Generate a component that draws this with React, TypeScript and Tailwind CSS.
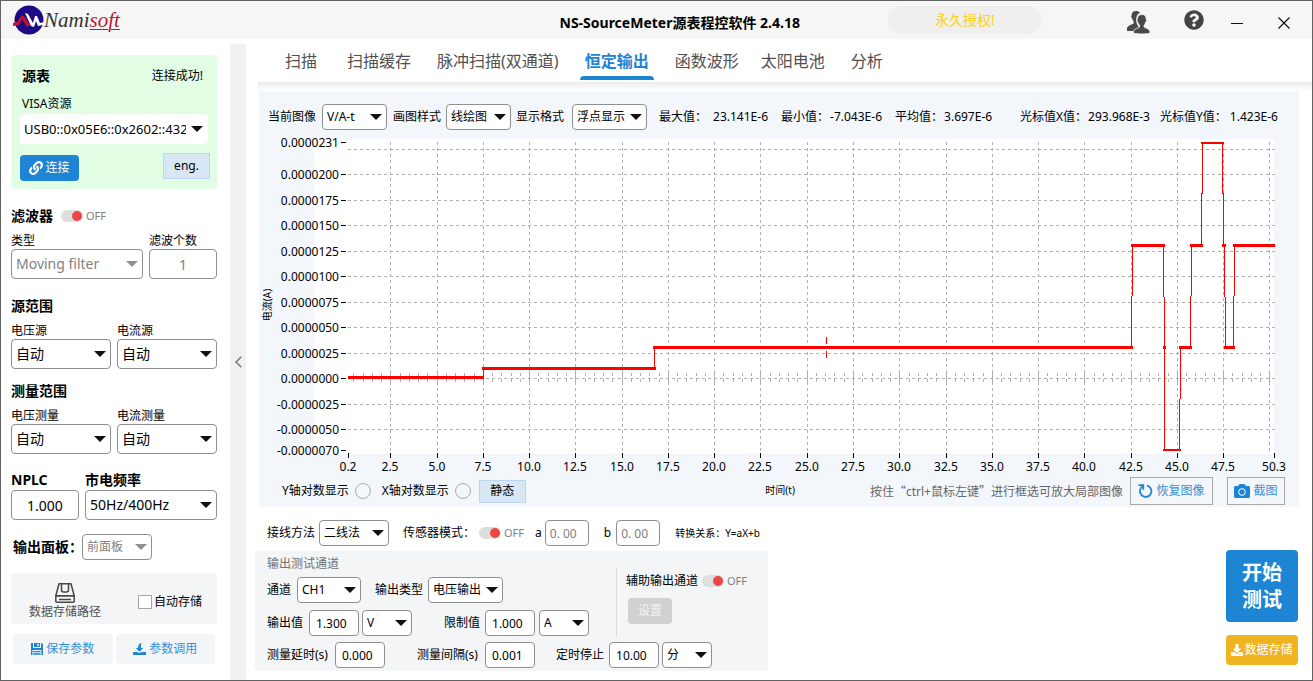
import React from "react";
import { FaCamera, FaDownload, FaLink, FaQuestionCircle } from "react-icons/fa";

function Field({
  label,
  children,
  className = "",
}: {
  label: string;
  children: React.ReactNode;
  className?: string;
}) {
  return (
    <label className={`flex shrink-0 items-center whitespace-nowrap text-xs ${className}`}>
      <span>{label}</span>
      {children}
    </label>
  );
}

function Select({
  value,
  className,
  box = "h-[26px] border border-[#8f8f8f] pl-1 pr-4 text-xs",
  disabled = false,
  label,
}: {
  value: string;
  className: string;
  box?: string;
  disabled?: boolean;
  label?: string;
}) {
  return (
    <span className={`relative block ${className}`}>
      <select
        aria-label={label}
        disabled={disabled}
        defaultValue={value}
        className={`block w-full appearance-none rounded bg-white leading-5 text-black disabled:text-[#808080] disabled:opacity-100 ${box}`}
      >
        <option>{value}</option>
      </select>
      <svg
        viewBox="0 0 12 6"
        className={`pointer-events-none absolute right-[5px] top-1/2 -mt-[3px] h-[6px] w-3 ${
          disabled ? "text-[#909090]" : "text-[#111]"
        }`}
      >
        <path d="M0 0h12L6 6z" fill="currentColor" />
      </svg>
    </span>
  );
}

function NumberBox({
  value,
  className,
  disabled = false,
  label,
}: {
  value: string;
  className: string;
  disabled?: boolean;
  label?: string;
}) {
  return (
    <input
      type="text"
      aria-label={label}
      defaultValue={value}
      disabled={disabled}
      className={`rounded border border-[#8f8f8f] bg-white text-black disabled:text-[#808080] ${className}`}
    />
  );
}

function Toggle({ label }: { label: string }) {
  return (
    <span className="flex items-center gap-[3px]">
      <button
        type="button"
        role="switch"
        aria-checked="false"
        aria-label={label}
        className="flex h-3 w-[22px] items-center justify-end rounded-full bg-[#dddfdf]"
      >
        <span className="mr-px size-[10px] rounded-full bg-[#ee4545]" />
      </button>
      <span className="text-[11px] leading-4 text-[#808080]">OFF</span>
    </span>
  );
}

function Logo() {
  return (
    <svg viewBox="0 0 32 30" className="h-[30px] w-8">
      <circle cx="17" cy="15" r="14.5" fill="#1b0c86" />
      <path d="M1 18l4-1 5-7 3 2 5 8-3 2-5-8-3 6-6 1z" fill="#c3122f" />
      <path d="M13 8l3 1 5 9 2-7 2 0 3 7 4-1-1 3-5 1-2-5-2 6-3-1z" fill="#fff" />
    </svg>
  );
}

function UsersIcon() {
  return (
    <svg viewBox="0 0 24 24" className="size-6" fill="#4a4a4a">
      <path d="M10 1c-3 0-4.500 2-4.400 4.600-.7.200-.5 2.500.6 3 .3 1.500 1 2.200 1.400 2.800v2c-2 1.300-5.800 1.800-6.600 4.600v3h8c.6-2 2.500-3 4-3.800-2-2-3-5-2.800-8C10.300 6 11.500 3.500 14 3 13 1.500 11.800 1 10 1z" />
      <path d="M16 4.500c-3.200 0-4.800 2-4.600 4.800-.8.300-.5 2.600.6 3.100.3 1.500.9 2.200 1.500 2.700v2c-1.800 1.300-5.300 1.600-6 4.300-.3 1.300.5 2 2 2.200 4 .5 9 .5 13 0 1.200-.2 1.700-1 1.300-2.300-.7-2.500-4-3-5.700-4.200v-2c.6-.6 1.100-1.300 1.400-2.700 1-.5 1.400-2.800.6-3.100.2-2.800-1-4.800-4.100-4.800z" stroke="#f6f6f6" strokeWidth=".8" />
    </svg>
  );
}

function DriveIcon() {
  return (
    <svg viewBox="0 0 20 20" className="size-5" fill="none" stroke="#484848" strokeWidth="1.500">
      <path d="M4 .8h12l3.200 12H.8z" strokeLinejoin="round" />
      <path d="M6.500.800v6.200q0 2 2 2h3q2 0 2-2V.800" />
      <rect x=".8" y="12.800" width="18.400" height="6.400" rx="1" />
      <path d="M4 16.500h12" />
    </svg>
  );
}

function SaveIcon() {
  return (
    <svg viewBox="0 0 12 12" className="size-3" fill="#1e84d4">
      <path fillRule="evenodd" d="M0 0h2v5h8V0h.8L12 1.200V12h-1.500V7h-9v5H0z" />
      <path fillRule="evenodd" d="M3 0h6v4H3zM6.300.700v2.600h1.500V.700z" />
      <path d="M2.300 8h7.400v1.200H2.300zM2.300 10.200h7.400v1.600H2.300z" />
    </svg>
  );
}

function ImportIcon() {
  return (
    <svg viewBox="0 0 13 12" className="h-3 w-[13px]" fill="#1e84d4">
      <path d="M9 0C7.600.600 7.800 2.500 8 5h2.300L6.500 8.800 2.800 5h2.300C5 2 6.300 0 9 0z" />
      <path d="M0 9h4l2.500 1L9 9h4v3H0z" />
    </svg>
  );
}

function RestoreIcon() {
  return (
    <svg viewBox="0 0 15 14" className="h-[14px] w-[15px]" fill="none" stroke="#1e84d4" strokeWidth="1.800">
      <path d="M9 1.600A5.700 5.700 0 1 1 2.600 4.600" />
      <path d="M.5 1.200h4.800v4.600" />
      <path d="M5.200 1.300L2.400 4.800" />
    </svg>
  );
}

const tabs = [
  { name: "扫描", gap: "mr-5" },
  { name: "扫描缓存", gap: "mr-4" },
  { name: "脉冲扫描(双通道)", gap: "mr-4" },
  { name: "恒定输出", gap: "mr-4" },
  { name: "函数波形", gap: "mr-3" },
  { name: "太阳电池", gap: "mr-4" },
  { name: "分析", gap: "" },
];

const xPos = (t: number) => Math.round(390.3 + ((t - 2.5) / 2.5) * 46.27);
const yPos = (n: number) => Math.round(378 - n * 25.5);

const xMajor = Array.from({ length: 20 }, (_, i) => 2.5 * (i + 1));
const xMinor = Array.from({ length: 100 }, (_, i) => 0.5 * (i + 1)).filter((t) => t % 2.5 !== 0);
const yMajor = [9, 8, 7, 6, 5, 4, 3, 2, 1, 0, -1, -2];

const yTicks = [
  { y: 142, text: "0.0000231" },
  ...yMajor.slice(1).map((n) => ({ y: yPos(n), text: ((n * 25) / 1e7).toFixed(7) })),
  { y: 450, text: "-0.0000070" },
];
const xTicks = [
  { x: 348, text: "0.2" },
  ...xMajor.slice(0, -1).map((t) => ({ x: xPos(t), text: t.toFixed(1) })),
  { x: 1274, text: "50.3" },
];

// Horizontal levels of the trace: x1, x2, y, thickness
const levels = [
  [348, 484, 376, 3],
  [482, 656, 367, 3],
  [653, 1133, 346, 3],
  [1131, 1165, 244, 3],
  [1163, 1166, 346, 3],
  [1163, 1181, 449, 2],
  [1179, 1192, 346, 3],
  [1190, 1203, 244, 3],
  [1201, 1224, 142, 2],
  [1222, 1226, 244, 3],
  [1224, 1235, 346, 3],
  [1233, 1275, 244, 3],
];
// Vertical edges of the trace: x, y1, y2
const edges = [
  [483, 368, 377],
  [654, 347, 368],
  [1131, 296, 347],
  [1132, 245, 296],
  [1163, 245, 297],
  [1164, 297, 450],
  [1179, 399, 450],
  [1180, 347, 399],
  [1190, 296, 347],
  [1191, 245, 296],
  [1201, 193, 245],
  [1202, 143, 194],
  [1222, 143, 194],
  [1223, 193, 245],
  [1224, 245, 297],
  [1225, 297, 347],
  [1233, 296, 347],
  [1234, 245, 296],
];

function Chart() {
  return (
    <svg viewBox="259 133 1040 342" className="mt-[3px] block w-full text-xs" role="img" aria-label="电流-时间曲线">
      <rect x="314" y="139" width="960" height="315" fill="#fff" />
      <g stroke="#b0b0b0" strokeDasharray="3 3" shapeRendering="crispEdges">
        {yMajor.map((n) => (
          <path key={n} d={`M348 ${yPos(n) + 0.5}H1275`} />
        ))}
        {xMajor.map((t) => (
          <path key={t} d={`M${xPos(t) + 0.5} 142V454`} />
        ))}
        {xMinor.map((t) => (
          <path key={t} d={`M${xPos(t) + 0.5} 373V382`} />
        ))}
      </g>
      <g stroke="#b0b0b0" shapeRendering="crispEdges">
        {xMajor.map((t) => (
          <path key={t} d={`M${xPos(t) + 0.5} 372V384`} />
        ))}
      </g>
      <g stroke="#000" shapeRendering="crispEdges">
        {yTicks.map((t) => (
          <path key={t.text} d={`M341 ${t.y + 0.5}h5`} />
        ))}
        {xTicks.map((t) => (
          <path key={t.text} d={`M${t.x + 0.5} 453v5`} />
        ))}
      </g>
      <g fill="#000">
        {yTicks.map((t) => (
          <text key={t.text} x="339" y={t.y + 5} textAnchor="end">
            {t.text}
          </text>
        ))}
        {xTicks.map((t) => (
          <text key={t.text} x={t.x} y="471" textAnchor="middle">
            {t.text}
          </text>
        ))}
        <text x="271" y="305" transform="rotate(-90 271 305)" textAnchor="middle" className="text-[10px]">
          电流(A)
        </text>
      </g>
      <g fill="#f00" shapeRendering="crispEdges">
        {levels.map(([x1, x2, y, h]) => (
          <rect key={`${x1}-${y}`} x={x1} y={y} width={x2 - x1} height={h} />
        ))}
        {edges.map(([x, y1, y2]) => (
          <rect key={`${x}-${y1}`} x={x} y={y1} width="1" height={y2 - y1} />
        ))}
        <rect x="826" y="337" width="1" height="7" />
        <rect x="826" y="351" width="1" height="7" />
      </g>
    </svg>
  );
}

const tallBox = "h-[30px] border border-[#8f8f8f] pl-1 pr-4 text-sm";

function RangePair({ title, left, right }: { title: string; left: string; right: string }) {
  return (
    <section>
      <h2 className="h-5 text-sm font-bold leading-5">{title}</h2>
      <div className="mt-[7px] grid grid-cols-2 gap-[6px]">
        {[left, right].map((name) => (
          <label key={name} className="block text-xs leading-4">
            {name}
            <Select value="自动" className="w-full" box={tallBox} />
          </label>
        ))}
      </div>
    </section>
  );
}

function Sidebar() {
  return (
    <aside className="w-[229px] shrink-0 pl-[10px] pr-[13px] pt-4">
      <section className="rounded bg-[#e1fee5] pb-2 pl-[9px] pr-[7px] pt-[11px]">
        <div className="flex h-5 items-center justify-between pl-[2px] pr-[7px]">
          <h2 className="text-sm font-bold">源表</h2>
          <span className="text-xs">连接成功!</span>
        </div>
        <label className="mt-2 block">
          <span className="block pl-[2px] text-xs leading-5">VISA资源</span>
          <Select
            value="USB0::0x05E6::0x2602::4321"
            className="w-[188px]"
            box="h-[30px] pl-1 pr-[22px] text-[13px]"
          />
        </label>
        <div className="mt-[9px] flex items-start justify-between">
          <button type="button" className="mt-[2px] flex h-[26px] w-[59px] items-center justify-center gap-[2px] rounded bg-[#1e84d4] text-xs text-white">
            <FaLink className="size-[14px]" />
            连接
          </button>
          <button type="button" className="h-[26px] w-[47px] border border-[#bcd6f0] bg-[#d9e6f4] text-xs">
            eng.
          </button>
        </div>
      </section>

      <section className="mt-[17px]">
        <div className="flex h-5 items-center gap-2">
          <h2 className="text-sm font-bold">滤波器</h2>
          <Toggle label="滤波器" />
        </div>
        <div className="mt-[7px] flex gap-[6px]">
          <label className="block flex-1 text-xs leading-4">
            类型
            <Select value="Moving filter" disabled className="w-full" box={tallBox} />
          </label>
          <label className="block w-[68px] text-xs leading-4">
            滤波个数
            <NumberBox value="1" disabled className="block h-[30px] w-full text-center text-sm" />
          </label>
        </div>
      </section>

      <div className="mt-[17px] flex flex-col gap-3">
        <RangePair title="源范围" left="电压源" right="电流源" />
        <RangePair title="测量范围" left="电压测量" right="电流测量" />
      </div>

      <div className="mt-4 flex gap-[6px] text-sm font-bold leading-5">
        <label className="block w-[68px]">
          NPLC
          <NumberBox value="1.000" className="block h-[30px] w-full text-center text-sm font-normal" />
        </label>
        <label className="block flex-1">
          市电频率
          <Select value="50Hz/400Hz" className="w-full font-normal" box={tallBox} />
        </label>
      </div>

      <label className="mt-[14px] flex items-center pl-[2px] text-sm font-bold">
        <span className="w-[69px] whitespace-nowrap">输出面板：</span>
        <Select
          value="前面板"
          disabled
          className="w-[70px] font-normal"
        />
      </label>

      <div className="mt-[13px] flex h-[51px] items-center justify-between rounded bg-[#f3f5f7] pl-[18px] pr-[15px] pt-[6px]">
        <button type="button" className="flex flex-col items-center text-xs leading-[18px] text-[#505050]">
          <DriveIcon />
          数据存储路径
        </button>
        <label className="flex items-center gap-[2px] text-xs">
          <input type="checkbox" className="size-[14px] appearance-none border border-[#a6a6a6] bg-white" />
          自动存储
        </label>
      </div>

      <div className="mt-[10px] grid grid-cols-2 gap-[3px] px-[2px] text-xs text-[#3390d8]">
        <button type="button" className="flex h-[30px] items-center justify-center gap-[3px] rounded bg-[#f3f5f7]">
          <SaveIcon />
          保存参数
        </button>
        <button type="button" className="flex h-[30px] items-center justify-center gap-[3px] rounded bg-[#f3f5f7]">
          <ImportIcon />
          参数调用
        </button>
      </div>
    </aside>
  );
}

const stats = [
  { name: "最大值：", value: "23.141E-6", width: "w-[122px]", gap: "gap-[6px]" },
  { name: "最小值：", value: "-7.043E-6", width: "w-[114px]", gap: "gap-px" },
  { name: "平均值：", value: "3.697E-6", width: "w-[125px]", gap: "gap-px" },
  { name: "光标值X值：", value: "293.968E-3", width: "w-[140px]", gap: "gap-px" },
  { name: "光标值Y值：", value: "1.423E-6", width: "", gap: "gap-[3px]" },
];

function PlotPanel() {
  return (
    <section className="mr-[13px] bg-[#f3f7fb] pb-[2px] pt-3">
      <div className="flex h-[27px] items-center pl-[9px] pr-4">
        <Field label="当前图像" className="gap-[6px]">
          <Select value="V/A-t" className="w-[65px]" />
        </Field>
        <Field label="画图样式" className="ml-[6px] gap-[5px]">
          <Select value="线绘图" className="w-[65px]" />
        </Field>
        <Field label="显示格式" className="ml-[5px] gap-2">
          <Select value="浮点显示" className="w-[75px]" />
        </Field>
        <dl className="ml-3 flex whitespace-nowrap text-xs">
          {stats.map((s) => (
            <div key={s.name} className={`flex shrink-0 ${s.width} ${s.gap}`}>
              <dt>{s.name}</dt>
              <dd>{s.value}</dd>
            </div>
          ))}
        </dl>
      </div>

      <Chart />

      <div className="mt-[2px] flex h-7 items-center pl-[23px] pr-[14px] text-xs">
        <label className="flex items-center gap-[6px] whitespace-nowrap">
          Y轴对数显示
          <input type="radio" name="logY" className="size-4 appearance-none rounded-full border border-[#a8a8a8]" />
        </label>
        <label className="ml-[11px] flex items-center gap-[6px] whitespace-nowrap">
          X轴对数显示
          <input type="radio" name="logX" className="size-4 appearance-none rounded-full border border-[#a8a8a8]" />
        </label>
        <button type="button" className="ml-2 h-[23px] w-[47px] border border-[#bcd6f0] bg-[#d9e6f4]">
          静态
        </button>
        <span className="ml-auto mr-[75px] text-[10px]">时间(t)</span>
        <span className="mr-[7px] whitespace-nowrap text-[#666]">
          按住<span className="font-['Noto_Sans_CJK_SC',sans-serif]">“</span>ctrl+鼠标左键
          <span className="font-['Noto_Sans_CJK_SC',sans-serif]">”</span>进行框选可放大局部图像
        </span>
        <button type="button" className="flex h-7 w-[83px] items-center justify-center gap-[3px] border border-[#aaa] text-[#3390d8]">
          <RestoreIcon />
          恢复图像
        </button>
        <button type="button" className="ml-[14px] flex h-7 w-[58px] items-center justify-center gap-[3px] border border-[#aaa] text-[#3390d8]">
          <FaCamera className="size-4 text-[#1e84d4]" />
          截图
        </button>
      </div>
    </section>
  );
}

const smallInput = "h-[26px] w-[50px] pl-[6px] text-xs";

function OutputPanel() {
  return (
    <section className="-ml-1 mt-[5px] w-[513px] rounded bg-[#f3f5f7] pb-[3px] pl-3 pt-1">
      <div className="flex">
        <div className="w-[349px]">
          <h3 className="h-[18px] text-xs leading-[18px] text-[#707070]">输出测试通道</h3>
          <div className="mt-1 flex">
            <Field label="通道" className="gap-[6px]">
              <Select value="CH1" className="w-16" />
            </Field>
            <Field label="输出类型" className="ml-[14px] gap-[5px]">
              <Select value="电压输出" className="w-[75px]" />
            </Field>
          </div>
          <div className="mt-[7px] flex">
            <Field label="输出值" className="gap-[6px]">
              <NumberBox value="1.300" className={smallInput} />
            </Field>
            <Select value="V" label="输出值单位" className="ml-[3px] w-[50px]" />
            <Field label="限制值" className="ml-8 gap-[5px]">
              <NumberBox value="1.000" className={smallInput} />
            </Field>
            <Select value="A" label="限制值单位" className="ml-1 w-[50px]" />
          </div>
        </div>
        <div className="mt-3 h-[70px] border-l border-[#d8dadc] pl-[9px] pt-1">
          <div className="flex h-5 items-center gap-1 whitespace-nowrap text-xs">
            辅助输出通道
            <Toggle label="辅助输出通道" />
          </div>
          <button type="button" disabled className="ml-[2px] mt-[7px] h-[26px] w-11 rounded bg-[#d1d1d1] text-xs text-[#f4f4f4]">
            设置
          </button>
        </div>
      </div>
      <div className="mt-[5px] flex">
        <Field label="测量延时(s)" className="w-[118px] justify-between">
          <NumberBox value="0.000" className={smallInput} />
        </Field>
        <Field label="测量间隔(s)" className="ml-8 w-[118px] justify-between">
          <NumberBox value="0.001" className={smallInput} />
        </Field>
        <Field label="定时停止" className="ml-[21px] gap-[5px]">
          <NumberBox value="10.00" className={smallInput} />
        </Field>
        <Select value="分" label="定时停止单位" className="ml-[3px] w-[50px]" />
      </div>
    </section>
  );
}

export default function App() {
  return (
    <div
      lang="zh-CN"
      className="min-h-screen border border-[#636363] bg-white font-['Noto_Sans','Noto_Sans_CJK_SC',sans-serif] text-black"
    >
      <header className="flex h-[38px] items-center bg-[#f6f6f6]">
        <div className="flex flex-1 items-center pl-[11px]">
          <Logo />
          <span className="font-['Liberation_Serif',serif] text-[21px] italic leading-6 text-[#333]">
            Nami<span className="text-[#c3122f] underline decoration-1 underline-offset-2">soft</span>
          </span>
        </div>
        <h1 className="whitespace-nowrap pt-[6px] text-sm font-bold">NS-SourceMeter源表程控软件 2.4.18</h1>
        <div className="ml-[88px] flex shrink-0 items-center pr-[22px]">
          <span className="mr-[84px] flex h-7 w-[154px] items-center justify-center rounded-full bg-[#efefef] text-sm text-[#ffd400]">
            永久授权!
          </span>
          <button type="button" aria-label="用户" className="mt-1">
            <UsersIcon />
          </button>
          <button type="button" aria-label="帮助" className="ml-[34px]">
            <FaQuestionCircle className="size-5 text-[#444]" />
          </button>
          <button type="button" aria-label="最小化" className="ml-[27px]">
            <svg viewBox="0 0 12 12" className="mt-[5px] size-3" stroke="#111" shapeRendering="crispEdges">
              <path d="M0 6.500h12" />
            </svg>
          </button>
          <button type="button" aria-label="关闭" className="ml-[35px]">
            <svg viewBox="0 0 12 12" className="mt-[5px] size-3" stroke="#111" strokeWidth="1.200">
              <path d="M.5.500l11 11M11.500.500l-11 11" />
            </svg>
          </button>
        </div>
      </header>

      <div className="flex">
        <Sidebar />
        <button
          type="button"
          aria-label="收起侧栏"
          className="mt-[5px] flex w-4 shrink-0 items-center justify-center self-stretch bg-[#f0f2f2]"
        >
          <svg viewBox="0 0 7 12" className="h-3 w-[7px]" fill="none" stroke="#707070" strokeWidth="1.400">
            <path d="M6.300.700L1 6l5.300 5.300" />
          </svg>
        </button>

        <main className="min-w-0 flex-1 pb-[9px] pl-3">
          <nav className="flex h-[43px] items-stretch pl-[22px] text-base">
            {tabs.map((tab) => {
              const active = tab.name === "恒定输出";
              return (
                <button
                  key={tab.name}
                  type="button"
                  aria-current={active ? "page" : undefined}
                  className={`flex flex-col items-center whitespace-nowrap pt-[10px] leading-6 ${tab.gap} ${
                    active ? "font-bold text-[#1e84d4]" : "text-[#505050]"
                  }`}
                >
                  <span className="px-[5px]">{tab.name}</span>
                  {active && <span className="mt-[3px] h-1 w-full rounded-t bg-[#1e84d4]" />}
                </button>
              );
            })}
          </nav>
          <div className="h-[9px] bg-linear-to-b from-[#ebebeb] to-white" />
          <div className="pl-px">
            <PlotPanel />
            <div className="flex items-start justify-between pr-[13px]">
              <div>
                <div className="mt-[13px] flex items-center pl-2">
                  <Field label="接线方法" className="gap-1">
                    <Select value="二线法" className="w-[70px]" />
                  </Field>
                  <span className="ml-[14px] mr-1 whitespace-nowrap text-xs">传感器模式：</span>
                  <Toggle label="传感器模式" />
                  <Field label="a" className="ml-[11px] gap-[3px]">
                    <NumberBox value="0. 00" disabled className="h-[26px] w-11 pl-1 text-xs" />
                  </Field>
                  <Field label="b" className="ml-[15px] gap-[5px]">
                    <NumberBox value="0. 00" disabled className="h-[26px] w-11 pl-1 text-xs" />
                  </Field>
                  <span className="ml-[15px] whitespace-nowrap text-[10px]">转换关系：Y=aX+b</span>
                </div>
                <OutputPanel />
              </div>
              <div className="mt-[43px] flex w-[73px] flex-col gap-[13px] pr-px text-white">
                <button type="button" className="h-[72px] rounded bg-[#1e84d4] text-xl font-bold leading-[27px]">
                  开始
                  <br />
                  测试
                </button>
                <button type="button" className="flex h-[30px] items-center justify-center gap-px rounded bg-[#efb41f] text-xs">
                  <FaDownload className="size-3" />
                  数据存储
                </button>
              </div>
            </div>
          </div>
        </main>
      </div>
    </div>
  );
}
